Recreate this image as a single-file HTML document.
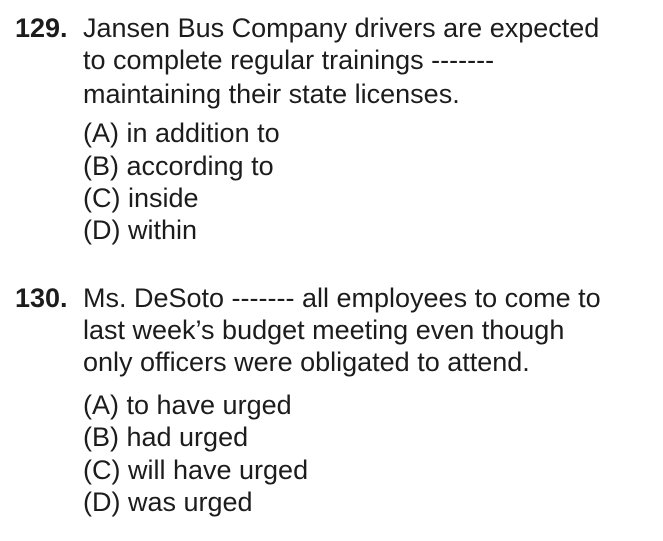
<!DOCTYPE html>
<html><head><meta charset="utf-8"><style>
html,body{margin:0;padding:0;background:#fff;}
body{width:663px;height:541px;position:relative;overflow:hidden;font-family:"Liberation Sans",Arial,sans-serif;font-size:27px;color:#1c1c1c;}
.l{position:absolute;white-space:nowrap;line-height:32px;}
.n{font-weight:bold;left:15px;}
</style></head><body>
<div class="l n" style="top:12px">129.</div>
<div class="l" style="left:83px;top:12px">Jansen Bus Company drivers are expected</div>
<div class="l" style="left:83px;top:44px">to complete regular trainings -------</div>
<div class="l" style="left:83px;top:78px">maintaining their state licenses.</div>
<div class="l" style="left:83px;top:117px">(A) in addition to</div>
<div class="l" style="left:83px;top:150px">(B) according to</div>
<div class="l" style="left:83px;top:182px">(C) inside</div>
<div class="l" style="left:83px;top:214px">(D) within</div>
<div class="l n" style="top:282px">130.</div>
<div class="l" style="left:83px;top:282px">Ms. DeSoto ------- all employees to come to</div>
<div class="l" style="left:83px;top:314px">last week’s budget meeting even though</div>
<div class="l" style="left:83px;top:346px">only officers were obligated to attend.</div>
<div class="l" style="left:83px;top:389px">(A) to have urged</div>
<div class="l" style="left:83px;top:421px">(B) had urged</div>
<div class="l" style="left:83px;top:454px">(C) will have urged</div>
<div class="l" style="left:83px;top:486px">(D) was urged</div>
</body></html>
